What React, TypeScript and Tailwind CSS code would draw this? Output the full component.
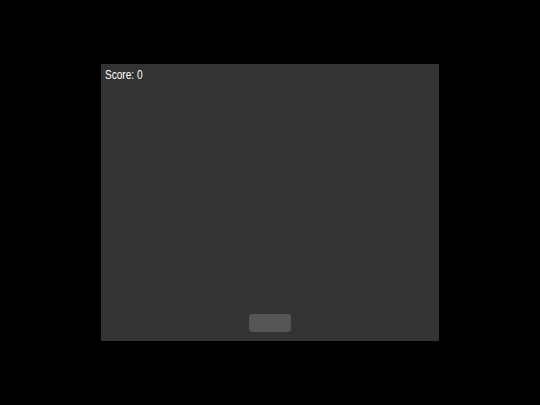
export default function App() {
  return (
    <div className="w-[540px] h-[405px] bg-black flex items-center justify-center">
      <div className="relative w-[338px] h-[277px] bg-[#333333]">
        <div
          className="absolute left-[4px] top-[4px] text-white text-[12px] leading-[14px] origin-left scale-x-[0.84]"
          style={{ fontFamily: '"Liberation Sans", Arial, sans-serif' }}
        >
          Score: 0
        </div>
        <div className="absolute left-[148px] bottom-[9px] w-[42px] h-[18px] rounded-[3px] bg-[#555555]" />
      </div>
    </div>
  );
}
